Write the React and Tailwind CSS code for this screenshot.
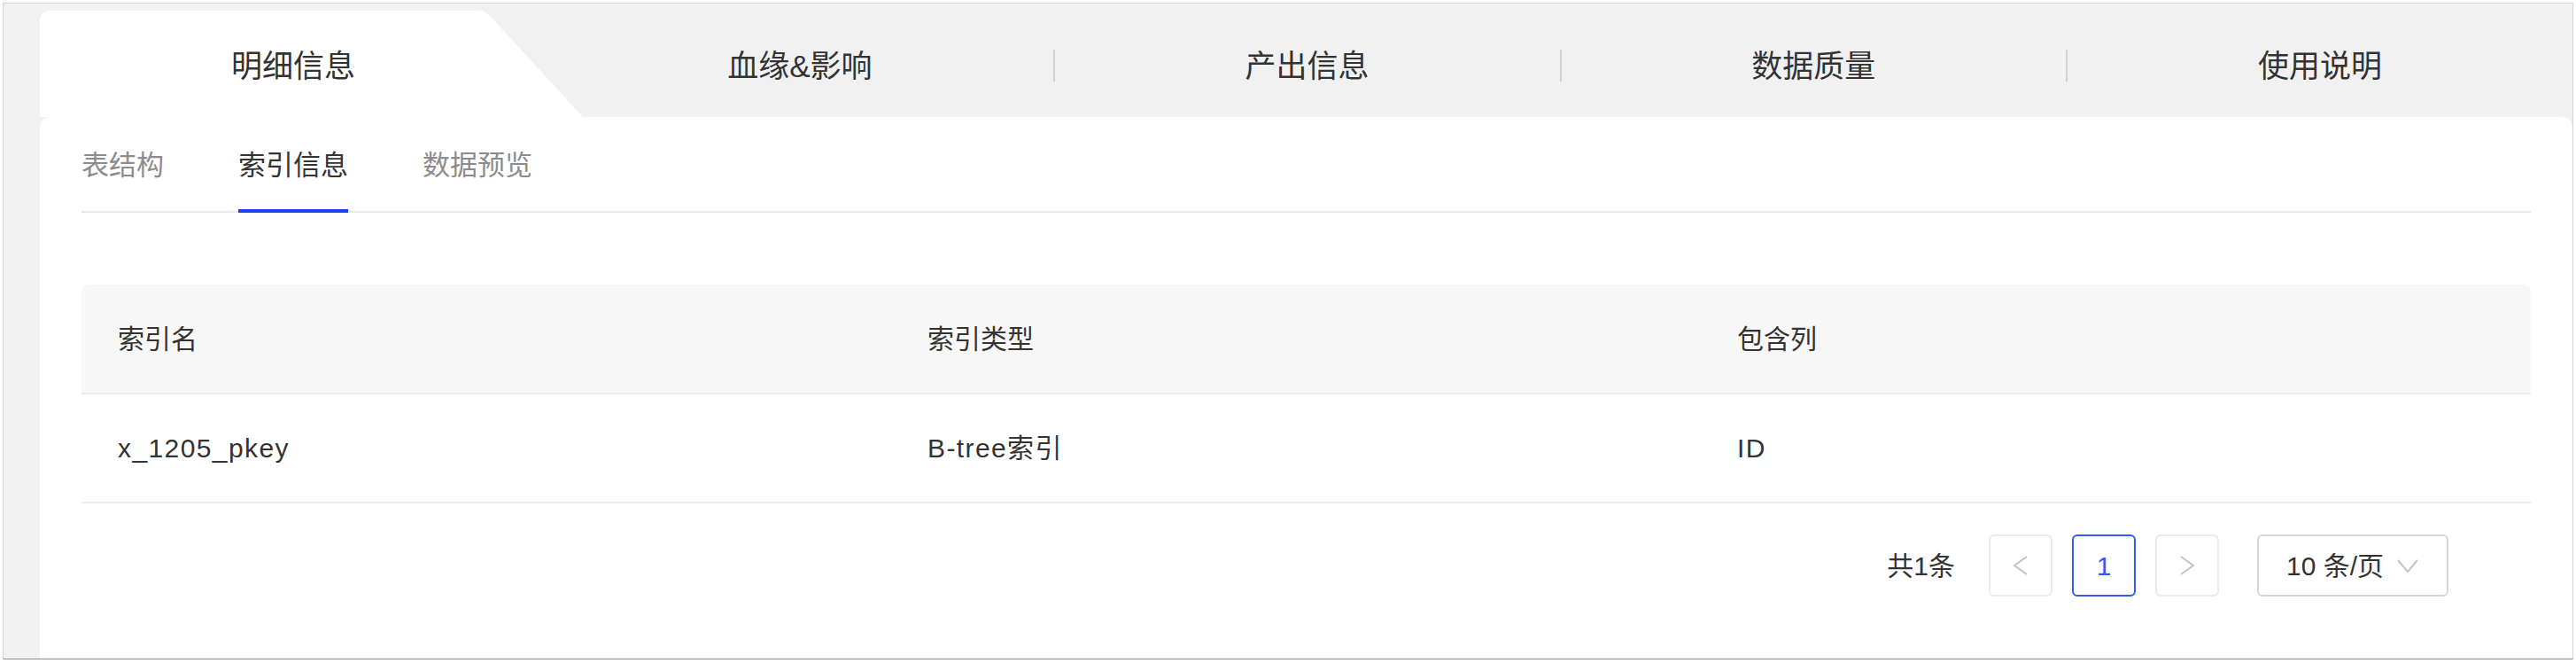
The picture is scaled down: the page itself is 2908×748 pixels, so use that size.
export default function App() {
  return (
    <div className="w-[2908px] h-[748px] bg-white pt-[3px] pl-[3px] pr-[3px] pb-[4px] font-['Liberation_Sans','Noto_Sans_CJK_SC',sans-serif]">
      <div className="h-full flex flex-col bg-[#f1f1f1] border border-[#d6d6d6] border-b-[#8c8c8c] pl-[41px] pt-[8px]">
        {/* top tab bar */}
        <div className="flex h-[120px] text-[35px] leading-none text-[#333]">
          <div className="w-[613px] -mr-[41px] pr-[41px] pt-[4px] bg-white [clip-path:path('M0,12Q0,0,12,0L494,0Q504,0,510,8L613,120L0,120Z')] flex items-center justify-center">
            明细信息
          </div>
          <div className="flex-1 flex items-center pt-[4px]">
            <div className="flex-1 text-center">血缘&amp;影响</div>
          </div>
          <div className="flex-1 flex items-center pt-[4px]">
            <div className="w-[2px] h-[36px] bg-[#d2d2d2]" />
            <div className="flex-1 text-center">产出信息</div>
          </div>
          <div className="flex-1 flex items-center pt-[4px]">
            <div className="w-[2px] h-[36px] bg-[#d2d2d2]" />
            <div className="flex-1 text-center">数据质量</div>
          </div>
          <div className="flex-1 flex items-center pt-[4px]">
            <div className="w-[2px] h-[36px] bg-[#d2d2d2]" />
            <div className="flex-1 text-center">使用说明</div>
          </div>
        </div>

        {/* content card */}
        <div className="flex-1 bg-white rounded-t-[12px] px-[47px] pt-[33px]">
          <div className="flex items-start gap-[84px] border-b-2 border-[#e9e9e9] text-[31px] leading-[44px]">
            <div className="pb-[29px] text-[#8c8c8c]">表结构</div>
            <div className="pb-[27px] border-b-4 border-[#1e3ff2] -mb-[2px] text-[#333]">索引信息</div>
            <div className="pb-[29px] text-[#8c8c8c]">数据预览</div>
          </div>

          <div className="mt-[81px] text-[30px] text-[#333]">
            <div className="grid grid-cols-[914px_914px_1fr] h-[124px] items-center bg-[#f7f7f7] rounded-t-[8px] border-b-2 border-[#ececec]">
              <div className="pl-[41px]">索引名</div>
              <div className="pl-[41px]">索引类型</div>
              <div className="pl-[41px]">包含列</div>
            </div>
            <div className="grid grid-cols-[914px_914px_1fr] h-[123px] items-center border-b-2 border-[#ececec] tracking-[1.4px]">
              <div className="pl-[41px]">x_1205_pkey</div>
              <div className="pl-[41px]">B-tree索引</div>
              <div className="pl-[41px]">ID</div>
            </div>
          </div>

          <div className="mt-[35px] flex items-center justify-end pr-[93px] text-[30px] text-[#333]">
            <div className="mr-[38px]">共1条</div>
            <div className="w-[72px] h-[70px] border-2 border-[#ebebeb] rounded-[6px] flex items-center justify-center">
              <svg width="18" height="22" viewBox="0 0 18 22" fill="none">
                <polyline points="16,1 2,11 16,21" stroke="#c2c2c2" strokeWidth="2" />
              </svg>
            </div>
            <div className="ml-[22px] w-[72px] h-[70px] border-2 border-[#2f5bf0] rounded-[6px] flex items-center justify-center text-[#2f5bf0]">
              1
            </div>
            <div className="ml-[22px] w-[72px] h-[70px] border-2 border-[#ebebeb] rounded-[6px] flex items-center justify-center">
              <svg width="18" height="22" viewBox="0 0 18 22" fill="none">
                <polyline points="2,1 16,11 2,21" stroke="#c2c2c2" strokeWidth="2" />
              </svg>
            </div>
            <div className="ml-[43px] w-[216px] h-[70px] border-2 border-[#d6d6d6] rounded-[6px] flex items-center pl-[31px]">
              <span>10 条/页</span>
              <svg className="ml-[15px]" width="24" height="15" viewBox="0 0 24 15" fill="none">
                <polyline points="1,1 12,14 23,1" stroke="#c4c4c4" strokeWidth="2" />
              </svg>
            </div>
          </div>
        </div>
      </div>
    </div>
  );
}
